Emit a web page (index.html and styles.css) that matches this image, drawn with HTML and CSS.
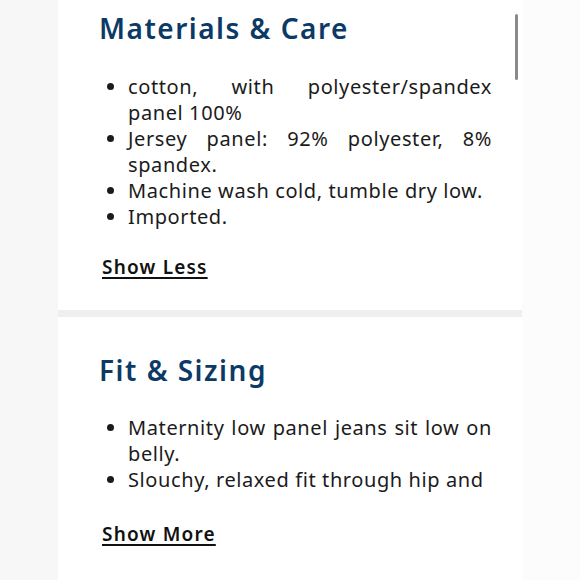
FILE: index.html
```html
<!DOCTYPE html>
<html>
<head>
<meta charset="utf-8">
<link rel="stylesheet" href="styles.css">
</head>
<body>
<div class="page">
  <div class="side left"></div>
  <main class="card">
    <section class="section first">
      <h2 class="title">Materials &amp; Care</h2>
      <ul class="list">
        <li>cotton, with polyester/spandex panel 100%</li>
        <li>Jersey panel: 92% polyester, 8% spandex.</li>
        <li>Machine wash cold, tumble dry low.</li>
        <li>Imported.</li>
      </ul>
      <a class="toggle" href="#">Show Less</a>
    </section>
    <div class="divider"></div>
    <section class="section second">
      <h2 class="title">Fit &amp; Sizing</h2>
      <ul class="list">
        <li>Maternity low panel jeans sit low on belly.</li>
        <li>Slouchy, relaxed fit through hip and</li>
      </ul>
      <a class="toggle" href="#">Show More</a>
    </section>
    <div class="scrollbar"></div>
  </main>
  <div class="side right"></div>
</div>
</body>
</html>
```
FILE: styles.css
```css
html, body {
  margin: 0;
  padding: 0;
  background: #f8f8f8;
}
.page {
  display: flex;
  width: 580px;
  height: 580px;
  overflow: hidden;
}
.side.left {
  width: 58px;
  background: #f7f7f7;
}
.side.right {
  flex: 1;
  background: #fcfcfc;
}
.card {
  position: relative;
  width: 464px;
  background: #ffffff;
  font-family: "Noto Sans", "Open Sans", sans-serif;
}
.section {
  padding: 0 30px 0 41px;
}
.section.first {
  padding-top: 11px;
  padding-bottom: 30px;
}
.section.second {
  padding-top: 36px;
}
.title {
  margin: 0 0 29px;
  font-size: 28px;
  line-height: 34px;
  font-weight: 600;
  color: #0c3a66;
  letter-spacing: 1.5px;
}
.second .title {
  margin-bottom: 28px;
}
.list {
  margin: 0;
  padding: 0 0 0 29px;
  font-size: 20px;
  line-height: 26px;
  color: #1b1b1b;
  text-align: justify;
  letter-spacing: 0.6px;
}
.toggle {
  display: inline-block;
  margin-top: 24px;
  margin-left: 3px;
  font-size: 19px;
  line-height: 26px;
  font-weight: 600;
  color: #111;
  letter-spacing: 1.2px;
  text-decoration: underline;
  text-underline-offset: 3px;
  text-decoration-thickness: 2px;
}
.second .toggle {
  margin-top: 28px;
}
.divider {
  height: 7px;
  background: #efefef;
}
.scrollbar {
  position: absolute;
  left: 457px;
  top: 14px;
  width: 3px;
  height: 66px;
  border-radius: 2px;
  background: #8a8a8a;
}
```
